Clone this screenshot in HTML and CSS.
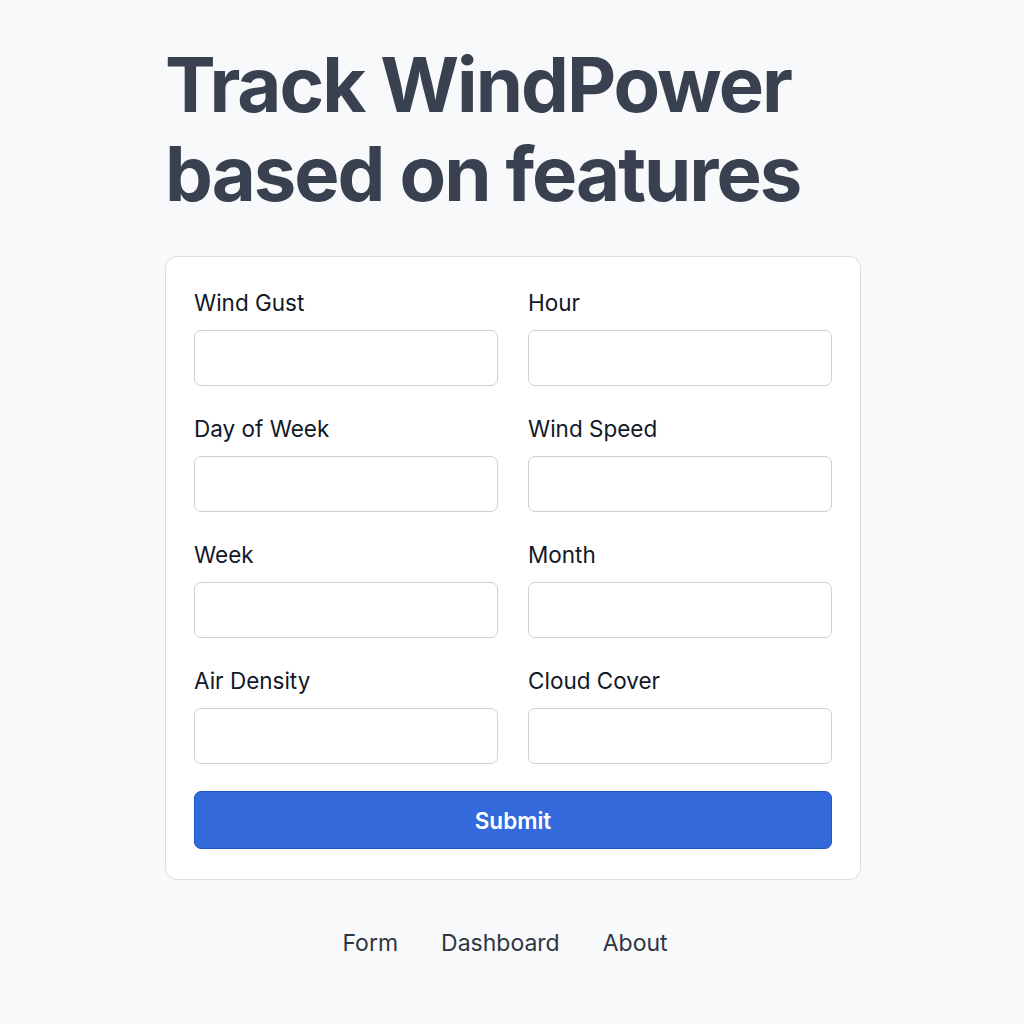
FILE: index.html
```html
<!DOCTYPE html>
<html>
<head>
<meta charset="utf-8">
<link rel="stylesheet" href="styles.css">
</head>
<body>
<main class="page">
  <h1 class="title">Track WindPower<br>based on features</h1>
  <form class="card">
    <div class="grid">
      <div class="field"><label class="label">Wind Gust</label><input class="input" type="text"></div>
      <div class="field"><label class="label">Hour</label><input class="input" type="text"></div>
      <div class="field"><label class="label">Day of Week</label><input class="input" type="text"></div>
      <div class="field"><label class="label">Wind Speed</label><input class="input" type="text"></div>
      <div class="field"><label class="label">Week</label><input class="input" type="text"></div>
      <div class="field"><label class="label">Month</label><input class="input" type="text"></div>
      <div class="field"><label class="label">Air Density</label><input class="input" type="text"></div>
      <div class="field"><label class="label">Cloud Cover</label><input class="input" type="text"></div>
    </div>
    <button class="submit" type="button">Submit</button>
  </form>
  <nav class="nav">
    <a class="nav-link">Form</a>
    <a class="nav-link">Dashboard</a>
    <a class="nav-link">About</a>
  </nav>
</main>
</body>
</html>
```
FILE: styles.css
```css
html, body {
  margin: 0;
  padding: 0;
  background: #f8f9fb;
  font-family: Inter, "Noto Sans", sans-serif;
}
.page {
  width: 696px;
  margin-left: 165px;
  padding-top: 40px;
}
.title {
  margin: 0;
  font-size: 76px;
  line-height: 89px;
  font-weight: 700;
  color: #394150;
  letter-spacing: -2px;
}
.card {
  margin-top: 38px;
  background: #ffffff;
  border: 1px solid #d9dde3;
  border-radius: 12px;
  padding: 33px 28px 30px 28px;
}
.grid {
  display: grid;
  grid-template-columns: 1fr 1fr;
  column-gap: 30px;
  row-gap: 30px;
}
.field {
  display: flex;
  flex-direction: column;
  gap: 14px;
}
.label {
  font-size: 22.5px;
  line-height: 26px;
  color: #111827;
}
.input {
  box-sizing: border-box;
  height: 56px;
  width: 100%;
  border: 1px solid #cbd2da;
  border-radius: 7px;
  background: #fff;
  margin: 0;
}
.submit {
  display: block;
  box-sizing: border-box;
  width: 100%;
  height: 58px;
  margin-top: 27px;
  background: #3469db;
  border: 1px solid #1f55c8;
  border-radius: 7px;
  color: #ffffff;
  font-family: Inter, "Noto Sans", sans-serif;
  font-size: 22.5px;
  font-weight: 600;
}
.nav {
  display: flex;
  justify-content: center;
  gap: 43px;
  margin-top: 50px;
  padding-right: 16px;
}
.nav-link {
  font-size: 23px;
  line-height: 26px;
  color: #2f3542;
}
```
